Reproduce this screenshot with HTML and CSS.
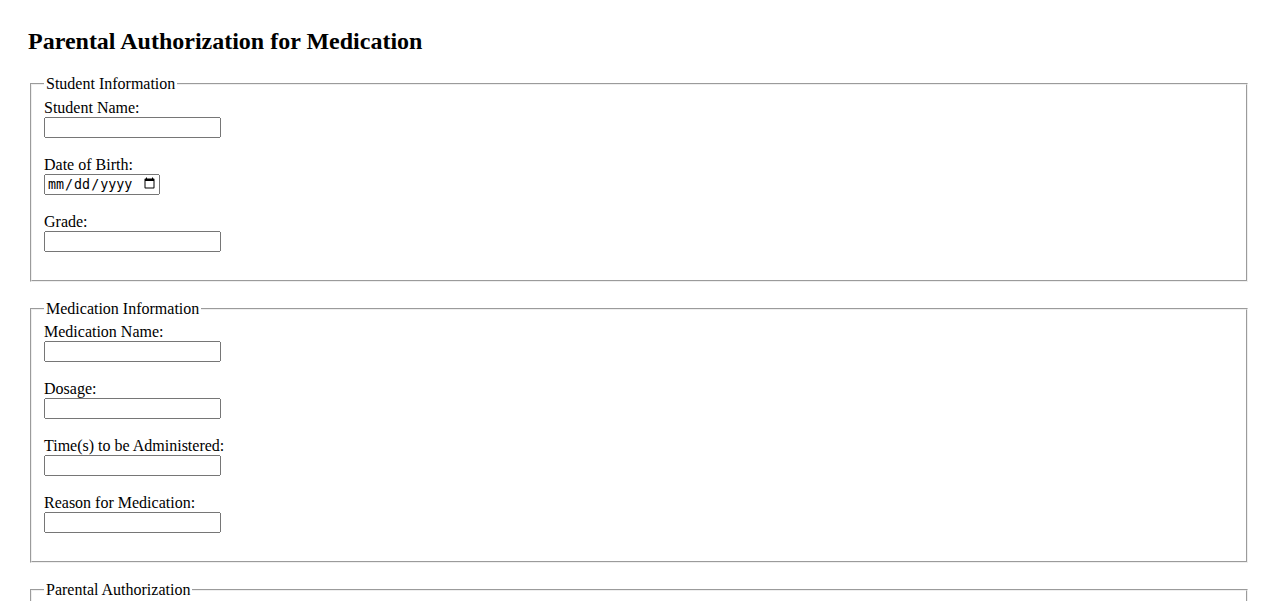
FILE: index.html
```html
<!DOCTYPE html>
<html lang="en">
<head>
<meta charset="utf-8">
<title>Parental Authorization for Medication</title>
<link rel="stylesheet" href="styles.css">
</head>
<body>
<div class="page">
  <h2 class="title">Parental Authorization for Medication</h2>
  <form class="form">
    <fieldset class="section">
      <legend>Student Information</legend>
      <label for="sname">Student Name:</label><br>
      <input type="text" id="sname" class="field"><br><br>
      <label for="dob">Date of Birth:</label><br>
      <input type="date" id="dob" class="field field-date"><br><br>
      <label for="grade">Grade:</label><br>
      <input type="text" id="grade" class="field"><br><br>
    </fieldset>
    <fieldset class="section">
      <legend>Medication Information</legend>
      <label for="mname">Medication Name:</label><br>
      <input type="text" id="mname" class="field"><br><br>
      <label for="dosage">Dosage:</label><br>
      <input type="text" id="dosage" class="field"><br><br>
      <label for="times">Time(s) to be Administered:</label><br>
      <input type="text" id="times" class="field"><br><br>
      <label for="reason">Reason for Medication:</label><br>
      <input type="text" id="reason" class="field"><br><br>
    </fieldset>
    <fieldset class="section">
      <legend>Parental Authorization</legend>
      <label for="pname">Parent/Guardian Name:</label><br>
      <input type="text" id="pname" class="field"><br><br>
      <label for="sig">Signature:</label><br>
      <input type="text" id="sig" class="field"><br><br>
      <label for="date">Date:</label><br>
      <input type="date" id="date" class="field field-date"><br><br>
    </fieldset>
  </form>
</div>
</body>
</html>
```

FILE: styles.css
```css
html, body {
  background: #ffffff;
}
body {
  margin: 8px;
  font-family: "Liberation Serif", "Times New Roman", serif;
  font-size: 16px;
  color: #000000;
}
.page {
  padding: 20px;
}
.title {
  margin: 0 0 0.83em;
  font-size: 24px;
  font-weight: bold;
}
.section {
  margin: 0 2px 18px;
}
.field {
  box-sizing: border-box;
  width: 177px;
  height: 21px;
}
.field-date {
  width: 116px;
}
```
